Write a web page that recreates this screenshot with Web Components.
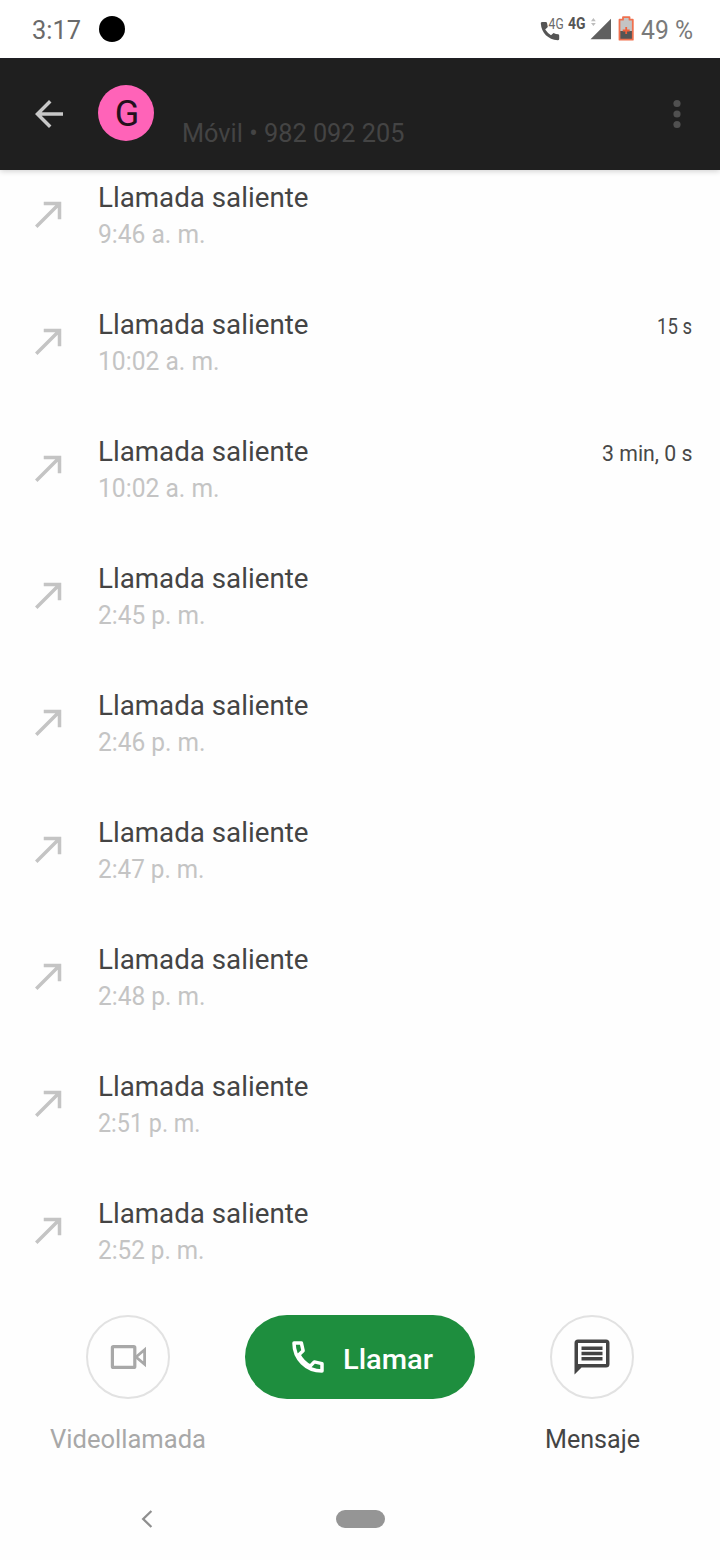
<!DOCTYPE html>
<html lang="es">
<head>
<meta charset="utf-8">
<title>Detalles de llamadas</title>
<style>
body { margin: 0; background: #fefefe; font-family: Roboto, "Open Sans", sans-serif; }
</style>
</head>
<body>
<call-details></call-details>
<script>
const define = (name, html, setup) => {
  const template = document.createElement('template');
  template.innerHTML = html;
  customElements.define(name, class extends HTMLElement {
    connectedCallback() {
      if (this.shadowRoot) return;
      this.attachShadow({ mode: 'open' }).append(template.content.cloneNode(true));
      if (setup) setup(this, this.shadowRoot);
    }
  });
};

/* Single line of text widened to a given advance width. */
define('tracked-text', `<style>
:host { display: block; white-space: nowrap; }
span { display: inline-block; transform-origin: 0 50%; }
</style><span></span>`, (host, root) => {
  const span = root.querySelector('span');
  const text = host.getAttribute('text');
  span.textContent = text;
  const target = Number(host.getAttribute('measure'));
  if (target) {
    span.style.transform = 'scaleX(' + target / span.getBoundingClientRect().width + ')';
    host.style.width = target + 'px';
  }
});

define('status-bar', `
<style>
:host { display: flex; height: 58px; box-sizing: border-box; padding: 0 27px 0 32px; justify-content: space-between; color: #6a6a6a; background: #fff; }
.left { display: flex; gap: 18px; padding-top: 16px; }
tracked-text { font-size: 25px; line-height: 30px; }
.dot { width: 26px; height: 26px; border-radius: 50%; background: #000; }
.right { display: flex; }
.right tracked-text { padding-top: 16px; color: #7a7a7a; }
svg { display: block; }
</style>
<div class="left"><tracked-text text="3:17" measure="49"></tracked-text><div class="dot"></div></div>
<div class="right">
<svg width="101" height="58" viewBox="540 0 101 58">
  <path d="M540.8 23.5Q540.5 22 542 22H545.8Q546.8 22 547 23L547.8 27L545.2 29.5Q547.5 33 551 35.2L553.5 33Q556 34.2 558.3 34.2Q559.2 34.4 559.2 35.5V39Q559 40.2 557.8 40.2C548 39.5 541.5 33 540.8 23.5Z" fill="#555"/>
  <text x="548.6" y="29.2" font-size="14" fill="#6a6a6a" textLength="15" lengthAdjust="spacingAndGlyphs">4G</text>
  <text x="568" y="29" font-size="16.5" font-weight="700" fill="#555" textLength="17.5" lengthAdjust="spacingAndGlyphs">4G</text>
  <path d="M591 21.3L593.4 18L595.8 21.3ZM591 23L593.4 26L595.8 23Z" fill="#bdbdbd"/>
  <path d="M590.5 39.3H611V18.8Z" fill="#5f5f5f"/>
  <path d="M623 17.2H629.5V19.7H632.8V39.7H619.5V19.7H623Z" fill="#c4c4c4"/>
  <path d="M620 31H632V39H620Z" fill="#555"/>
  <path d="M623 17.2H629.5V19.7H632.8V39.7H619.5V19.7H623Z" fill="none" stroke="#f0714f" stroke-width="1.8" stroke-linejoin="round"/>
  <path d="M626.2 27V34M622.7 30.5H629.7" stroke="#f0603a" stroke-width="1.8"/>
</svg>
<tracked-text text="49 %" measure="52"></tracked-text></div>`);

define('contact-header', `
<style>
:host { display: flex; height: 112px; box-sizing: border-box; background: #1f1f1f; border-top: 1px solid #1f1f25; padding: 0 20px 0 28px; box-shadow: 0 1px 6px rgba(0,0,0,.2); position: relative; z-index: 1; clip-path: inset(0 0 -10px 0); }
.back { margin-top: 34px; }
.avatar { width: 56px; height: 56px; margin: 26px 0 0 28px; border-radius: 50%; background: #ff63b8; color: #24101c; font-size: 36px; line-height: 58px; text-align: center; }
.avatar span { position: relative; left: 1px; }
tracked-text { margin: 60px 0 0 28px; font-size: 25px; line-height: 30px; color: #444; }
.more { margin: 34px 2px 0 auto; }
svg { display: block; }
</style>
<svg class="back" width="42" height="42" viewBox="0 0 24 24" fill="#c8c8c8"><path d="M20 11H7.83l5.59-5.59L12 4l-8 8 8 8 1.41-1.41L7.83 13H20z"/></svg>
<div class="avatar"><span>G</span></div>
<tracked-text text="Móvil • 982 092 205" measure="222.5"></tracked-text>
<svg class="more" width="42" height="42" viewBox="0 0 42 42" fill="#505050"><circle cx="21" cy="10.5" r="3.6"/><circle cx="21" cy="21" r="3.6"/><circle cx="21" cy="31.5" r="3.6"/></svg>`);

define('call-row', `
<style>
:host { display: flex; height: 127px; box-sizing: border-box; padding: 0 28px; }
svg { display: block; margin: 12px 28px 0 0; }
.text { padding-top: 1px; }
.kind { font-size: 28px; line-height: 32px; color: #444; }
.time { font-size: 25px; line-height: 30px; margin-top: 6px; color: #c4c4c4; }
.length { font-size: 21.5px; line-height: 26px; margin: 6px 0 0 auto; color: #484848; }
</style>
<svg width="42" height="42" viewBox="0 0 24 24" fill="#c4c4c4"><path d="M9 5v2h6.59L4 18.59 5.41 20 17 8.41V15h2V5z"/></svg>
<div class="text"></div>`, (host, root) => {
  const add = (parent, cls, text, measure) => {
    const el = document.createElement('tracked-text');
    el.className = cls;
    el.setAttribute('text', text);
    el.setAttribute('measure', measure);
    parent.append(el);
  };
  const box = root.querySelector('.text');
  add(box, 'kind', 'Llamada saliente', 210.5);
  add(box, 'time', host.getAttribute('time'), host.getAttribute('span'));
  if (host.hasAttribute('length')) add(root, 'length', host.getAttribute('length'), host.getAttribute('length-span'));
});

define('round-action', `
<style>
:host { display: flex; flex-direction: column; align-items: center; }
.ring { width: 84px; height: 84px; box-sizing: border-box; border: 2px solid #e2e2e2; border-radius: 50%; display: grid; place-items: center; }
tracked-text { font-size: 25px; line-height: 30px; margin-top: 26px; }
</style>
<div class="ring"><slot></slot></div>`, (host, root) => {
  const label = document.createElement('tracked-text');
  label.setAttribute('text', host.getAttribute('label'));
  label.setAttribute('measure', host.getAttribute('label-span'));
  root.append(label);
});

define('action-bar', `
<style>
:host { display: grid; grid-template-columns: 234px 230px 234px; padding: 0 11px; height: 161px; align-items: start; }
.call { height: 84px; border-radius: 42px; background: #1e8e3e; color: #fff; display: flex; align-items: center; box-sizing: border-box; padding-left: 42px; }
.call svg { margin-right: 14px; }
.call tracked-text { font-size: 28px; font-weight: 500; line-height: 32px; padding-top: 6px; }
svg { display: block; }
.video { color: #a8a8a8; }
.message { color: #444; }
</style>
<round-action class="video" label="Videollamada" label-span="156">
  <svg width="48" height="48" viewBox="0 0 48 48" fill="none" stroke="currentColor" stroke-width="3.2" stroke-linejoin="round"><rect x="8.4" y="13.6" width="22.4" height="20.8" rx="1"/><path d="M32 24L40.6 16.8V31.2Z" stroke-width="2.8" stroke-linejoin="miter"/></svg>
</round-action>
<div class="call">
  <svg width="42" height="42" viewBox="0 0 24 24" fill="none" stroke="#fff" stroke-width="2" stroke-linejoin="round"><path d="M4 4H8.2L9.2 8.4L6.8 10.7Q9 15 13.3 17.2L15.6 14.8L20 15.8V20C11 20 4 13 4 4Z"/></svg>
  <tracked-text text="Llamar" measure="90"></tracked-text>
</div>
<round-action class="message" label="Mensaje" label-span="95">
  <svg width="42" height="42" viewBox="0 0 24 24" fill="currentColor"><path fill-rule="evenodd" d="M4 2H20Q22 2 22 4V16Q22 18 20 18H6L2 22V4Q2 2 4 2ZM4 4V16H20V4ZM6 6H18V8H6ZM6 9H18V11H6ZM6 12H18V14H6Z"/></svg>
</round-action>`);

define('nav-bar', `
<style>
:host { display: flex; align-items: center; height: 85px; padding-left: 140px; }
svg { display: block; }
.home { width: 49px; height: 18px; border-radius: 9px; background: #959595; margin-left: 182px; }
</style>
<svg width="14" height="20" viewBox="0 0 14 20"><path d="M11.4 2L3.2 10L11.4 18" fill="none" stroke="#8f8f8f" stroke-width="2.3"/></svg>
<div class="home"></div>`);

define('call-details', `
<style>
:host { display: flex; flex-direction: column; width: 720px; height: 1560px; overflow: hidden; background: #fefefe; }
:host > * { flex: none; }
.list { flex: none; height: 1145px; box-sizing: border-box; padding-top: 11px; overflow: hidden; }
status-bar, contact-header, action-bar, nav-bar { flex: none; }
</style>
<status-bar></status-bar>
<contact-header></contact-header>
<div class="list">
  <call-row time="9:46 a. m." span="107.5"></call-row>
  <call-row time="10:02 a. m." span="121.5" length="15 s" length-span="35"></call-row>
  <call-row time="10:02 a. m." span="121.5" length="3 min, 0 s" length-span="90.5"></call-row>
  <call-row time="2:45 p. m." span="107.5"></call-row>
  <call-row time="2:46 p. m." span="107.5"></call-row>
  <call-row time="2:47 p. m." span="106.5"></call-row>
  <call-row time="2:48 p. m." span="107.5"></call-row>
  <call-row time="2:51 p. m." span="102.5"></call-row>
  <call-row time="2:52 p. m." span="106.5"></call-row>
</div>
<action-bar></action-bar>
<nav-bar></nav-bar>`);
</script>
</body>
</html>
